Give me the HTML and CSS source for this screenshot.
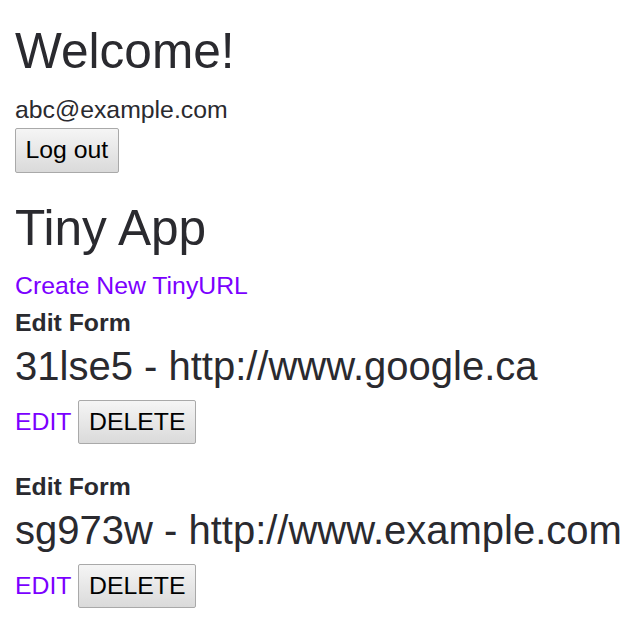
FILE: index.html
```html
<!DOCTYPE html>
<html>
<head>
<meta charset="utf-8">
<title>Tiny App</title>
<link rel="stylesheet" href="styles.css">
</head>
<body>
<header class="header">
  <h1 class="title">Welcome!</h1>
  <p class="email">abc@example.com</p>
  <form class="logout-form"><button class="btn" type="button">Log out</button></form>
</header>
<main class="main">
  <h1 class="title title-app">Tiny App</h1>
  <a class="link create" href="#">Create New TinyURL</a>
  <section class="entry">
    <h4 class="entry-label">Edit Form</h4>
    <h2 class="entry-url">31lse5 - http://www.google.ca</h2>
    <div class="entry-actions"><a class="link" href="#">EDIT</a><button class="btn btn-delete" type="button">DELETE</button></div>
  </section>
  <section class="entry entry-next">
    <h4 class="entry-label">Edit Form</h4>
    <h2 class="entry-url">sg973w - http://www.example.com</h2>
    <div class="entry-actions"><a class="link" href="#">EDIT</a><button class="btn btn-delete" type="button">DELETE</button></div>
  </section>
</main>
</body>
</html>
```
FILE: styles.css
```css
html, body {
  margin: 0;
  padding: 0;
  background: #ffffff;
}
body {
  padding: 0 15px;
  font-family: "Liberation Sans", Arial, sans-serif;
  font-size: 24.8px;
  line-height: normal;
  color: #2a2a2f;
}
.header {
  display: flex;
  flex-direction: column;
  align-items: flex-start;
}
.title {
  margin: 22px 0 0 0;
  font-size: 49.6px;
  font-weight: normal;
  line-height: normal;
  white-space: nowrap;
}
.email {
  margin: 16px 0 0 0;
}
.logout-form {
  margin: 4px 0 0 0;
}
.btn {
  font-family: "Liberation Sans", Arial, sans-serif;
  font-size: 24.8px;
  line-height: normal;
  color: #000;
  padding: 7px 9.5px 7.5px;
  border: 1px solid #a9a9a9;
  border-radius: 2px;
  background: linear-gradient(#f5f5f5, #dadada);
  margin: 0;
}
.main {
  display: flex;
  flex-direction: column;
  align-items: flex-start;
}
.title-app {
  margin-top: 26px;
}
.link {
  color: #7b00ff;
  text-decoration: none;
}
.create {
  margin-top: 15px;
}
.entry {
  display: flex;
  flex-direction: column;
  align-items: flex-start;
  margin-top: 9.5px;
}
.entry-next {
  margin-top: 29px;
}
.entry-label {
  margin: 0;
  font-size: 24.8px;
  font-weight: bold;
  line-height: normal;
}
.entry-url {
  margin: 7px 0 0 0;
  font-size: 40px;
  font-weight: normal;
  line-height: normal;
  white-space: nowrap;
}
.entry-actions {
  display: flex;
  align-items: baseline;
  gap: 7px;
  margin-top: 10.5px;
}
```
